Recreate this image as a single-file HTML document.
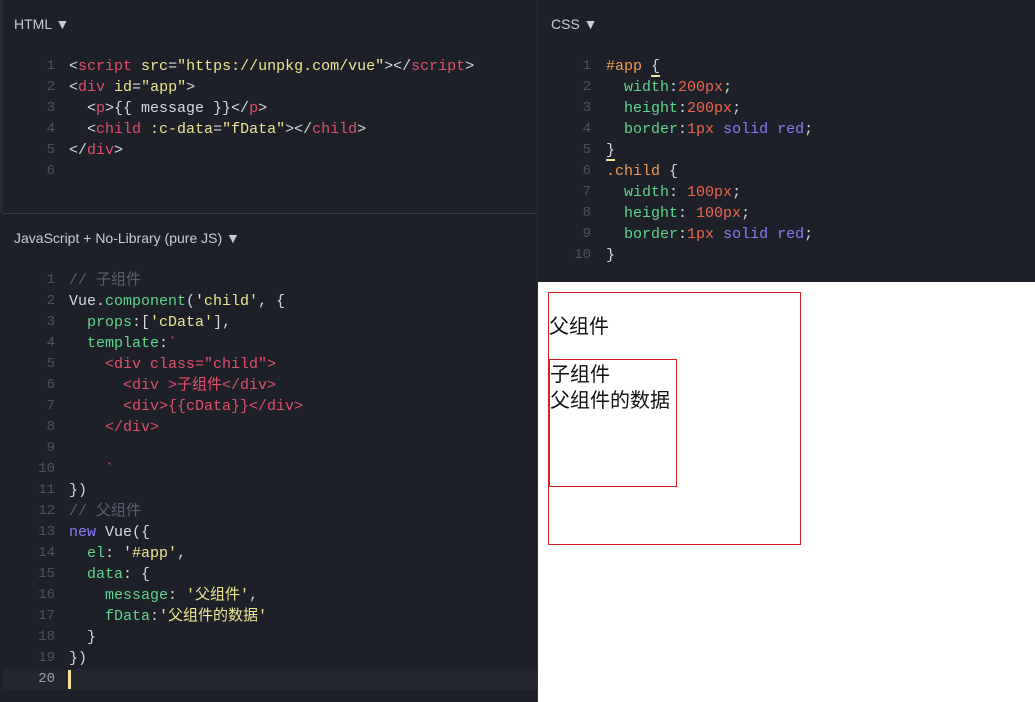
<!DOCTYPE html>
<html><head><meta charset="utf-8"><style>
*{margin:0;padding:0;box-sizing:border-box}
body{width:1035px;height:702px;overflow:hidden;background:#1d2029;position:relative;font-family:"Liberation Sans","Noto Sans CJK SC",sans-serif}
.pane{position:absolute;background:#1d2029}
.hdr{position:absolute;left:14px;color:#c9ccd3;font-size:14px}
.code{position:absolute;font-family:"Liberation Mono","Noto Sans CJK SC",monospace;font-size:15px;line-height:21px;color:#d6d8de;white-space:pre}
.ln{position:absolute;font-family:"Liberation Mono",monospace;font-size:14px;line-height:21px;color:#4d5260;text-align:right;width:30px;white-space:pre}
.t{color:#e2506a}.s{color:#eee58f}.g{color:#5fd68a}.p{color:#8a7cf2}.o{color:#f29a52}.n{color:#f0664b}.c{color:#5a6070}
</style></head><body>
<div class="pane" style="left:0;top:0;width:537px;height:213px;border-left:3px solid #262a33"></div>
<div style="position:absolute;left:3px;top:213px;width:534px;height:1px;background:#343844"></div>
<div class="pane" style="left:3px;top:214px;width:534px;height:488px"></div>
<div style="position:absolute;left:3px;top:669px;width:534px;height:21px;background:#232630"></div>
<div style="position:absolute;left:537px;top:0;width:1px;height:702px;background:#2a2d36"></div>
<div style="position:absolute;left:538px;top:282px;width:497px;height:420px;background:#fff"></div>

<div class="hdr" style="top:16px">HTML ▼</div>
<div class="ln" style="left:25px;top:56px">1
2
3
4
5
6</div>
<div class="code" style="left:69px;top:56px">&lt;<span class="t">script</span> <span class="s">src</span>=<span class="s">"https://unpkg.com/vue"</span>&gt;&lt;/<span class="t">script</span>&gt;
&lt;<span class="t">div</span> <span class="s">id</span>=<span class="s">"app"</span>&gt;
  &lt;<span class="t">p</span>&gt;{{ message }}&lt;/<span class="t">p</span>&gt;
  &lt;<span class="t">child</span> <span class="s">:c-data</span>=<span class="s">"fData"</span>&gt;&lt;/<span class="t">child</span>&gt;
&lt;/<span class="t">div</span>&gt;
</div>

<div class="hdr" style="top:230px">JavaScript + No-Library (pure JS) ▼</div>
<div class="ln" style="left:25px;top:270px">1
2
3
4
5
6
7
8
9
10
11
12
13
14
15
16
17
18
19
<span style="color:#9aa0ad">20</span></div>
<div class="code" style="left:69px;top:270px"><span class="c">// 子组件</span>
Vue.<span class="g">component</span>(<span class="s">'child'</span>, {
  <span class="g">props</span>:[<span class="s">'cData'</span>],
  <span class="g">template</span>:<span class="t">`</span>
<span class="t">    &lt;div class="child"&gt;
      &lt;div &gt;子组件&lt;/div&gt;
      &lt;div&gt;{{cData}}&lt;/div&gt;
    &lt;/div&gt;

    `</span>
})
<span class="c">// 父组件</span>
<span class="p">new</span> Vue({
  <span class="g">el</span>: <span class="s">'#app'</span>,
  <span class="g">data</span>: {
    <span class="g">message</span>: <span class="s">'父组件'</span>,
    <span class="g">fData</span>:<span class="s">'父组件的数据'</span>
  }
})
</div>
<div style="position:absolute;left:68px;top:670px;width:3px;height:19px;background:#f2e58f"></div>

<div class="hdr" style="left:551px;top:16px">CSS ▼</div>
<div class="ln" style="left:561px;top:56px">1
2
3
4
5
6
7
8
9
10</div>
<div class="code" style="left:606px;top:56px"><span class="o">#app</span> <span style="border-bottom:2px solid #eee58f">{</span>
  <span class="g">width</span>:<span class="n">200px</span>;
  <span class="g">height</span>:<span class="n">200px</span>;
  <span class="g">border</span>:<span class="n">1px</span> <span class="p">solid</span> <span class="p">red</span>;
<span style="border-bottom:2px solid #eee58f">}</span>
<span class="o">.child</span> {
  <span class="g">width</span>: <span class="n">100px</span>;
  <span class="g">height</span>: <span class="n">100px</span>;
  <span class="g">border</span>:<span class="n">1px</span> <span class="p">solid</span> <span class="p">red</span>;
}</div>

<div style="position:absolute;left:548px;top:292px;width:253px;height:253px;border:1px solid #d42020"></div>
<div style="position:absolute;left:549px;top:359px;width:128px;height:128px;border:1px solid #d42020"></div>
<div style="position:absolute;left:549px;top:314px;font-size:20px;color:#111;line-height:26px">父组件</div>
<div style="position:absolute;left:550px;top:362px;font-size:20px;color:#111;line-height:26px">子组件<br>父组件的数据</div>
</body></html>
